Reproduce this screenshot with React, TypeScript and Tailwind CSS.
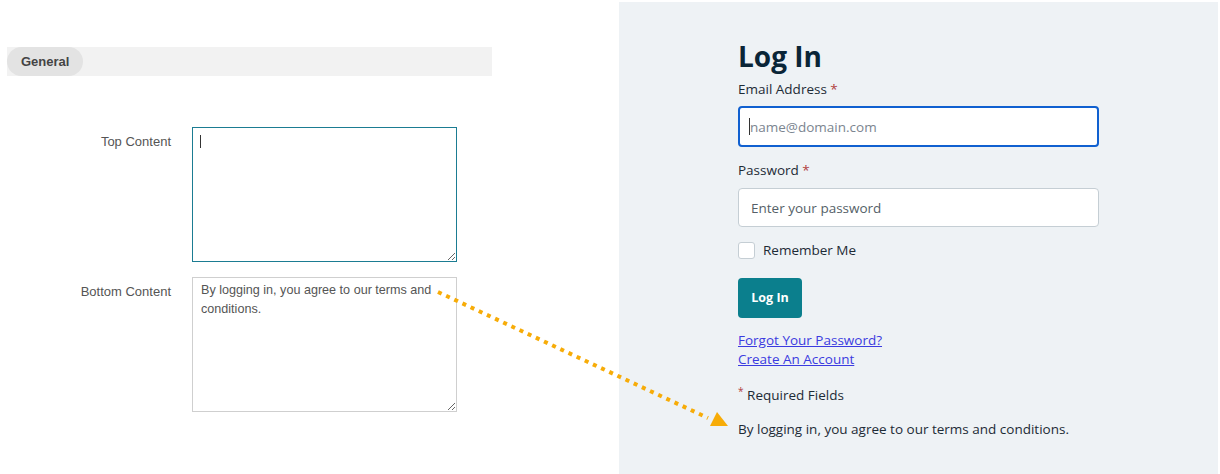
import React from "react";

const Caret = ({ className }: { className: string }) => (
  <span className={`absolute w-px bg-[#333] ${className}`} />
);

const Arrow = () => (
  <svg
    className="pointer-events-none absolute left-0 top-0"
    width="1220"
    height="474"
    viewBox="0 0 1220 474"
  >
    <line
      x1="438"
      y1="292"
      x2="708"
      y2="418"
      stroke="#f7ac08"
      strokeWidth="4"
      strokeDasharray="4 5"
    />
    <polygon points="710,426 717,412 728,426" fill="#f7ac08" />
  </svg>
);

export default function App() {
  return (
    <div className="relative flex h-[474px] w-[1220px] bg-white">
      {/* left: admin settings */}
      <div className="w-[619px] pl-[7px] pt-[47px] font-['Liberation_Sans',Arial,sans-serif] text-[13px] text-[#555]">
        <div className="flex h-[29px] w-[485px] bg-[#f2f2f2]">
          <div className="flex h-full items-center rounded-full bg-[#e3e3e3] px-[14px] font-bold text-[#444]">
            General
          </div>
        </div>

        <div className="mt-[51px] flex flex-col gap-[15px]">
          <div className="flex">
            <label className="w-[164px] pt-[5px] text-right text-[#555]">Top Content</label>
            <div className="relative ml-[21px]">
              <textarea className="block h-[135px] w-[265px] border border-[#1b7c92] px-[8px] py-[4px] text-[12.6px] leading-[20px] text-[#555] outline-none" />
              <Caret className="left-[8px] top-[8px] h-[13px]" />
            </div>
          </div>
          <div className="flex">
            <label className="w-[164px] pt-[5px] text-right text-[#555]">Bottom Content</label>
            <textarea
              className="ml-[21px] block h-[135px] w-[265px] border border-[#cfcfcf] px-[8px] py-[3px] text-[12.6px] leading-[19px] text-[#555] outline-none"
              defaultValue="By logging in, you agree to our terms and conditions."
            />
          </div>
        </div>
      </div>

      {/* right: login preview */}
      <div className="mr-[2px] mt-[2px] flex-1 bg-[#eef2f5] pl-[119px] font-['Open_Sans',sans-serif] text-[13.5px] text-[#1d2b36]">
        <h1 className="mt-[36px] text-[28px] font-bold leading-[36px] text-[#0a2537]">Log In</h1>

        <div className="mt-[6px] leading-[18px]">
          Email Address <span className="text-[#b0413e]">*</span>
        </div>
        <div className="relative mt-[8px]">
          <input
            className="block h-[41px] w-[361px] rounded-[4px] border-2 border-[#1060d0] bg-white px-[10px] text-[13.5px] text-[#333] outline-none placeholder:text-[#7b8590]"
            placeholder="name@domain.com"
          />
          <Caret className="left-[11px] top-[12px] h-[17px]" />
        </div>

        <div className="mt-[14px] leading-[18px]">
          Password <span className="text-[#b0413e]">*</span>
        </div>
        <input
          type="password"
          className="mt-[9px] block h-[39px] w-[361px] rounded-[4px] border border-[#c5ced4] bg-white px-[12px] text-[13.5px] outline-none placeholder:text-[#555f68]"
          placeholder="Enter your password"
        />

        <label className="mt-[15px] flex h-[17px] items-center gap-[8px]">
          <span className="block h-[17px] w-[17px] rounded-[3px] border border-[#c5ced4] bg-white" />
          <span>Remember Me</span>
        </label>

        <button className="mt-[19px] block h-[40px] w-[64px] rounded-[4px] bg-[#0b7f8d] text-[12.5px] font-bold text-white">
          Log In
        </button>

        <div className="mt-[13px] flex flex-col items-start leading-[19px]">
          <a href="#" className="text-[#3b3be0] underline">Forgot Your Password?</a>
          <a href="#" className="text-[#3b3be0] underline">Create An Account</a>
        </div>

        <div className="mt-[17px] leading-[19px]">
          <sup className="text-[#b0413e]">*</sup> Required Fields
        </div>

        <p className="mt-[15px] leading-[19px]">By logging in, you agree to our terms and conditions.</p>
      </div>

      <Arrow />
    </div>
  );
}
